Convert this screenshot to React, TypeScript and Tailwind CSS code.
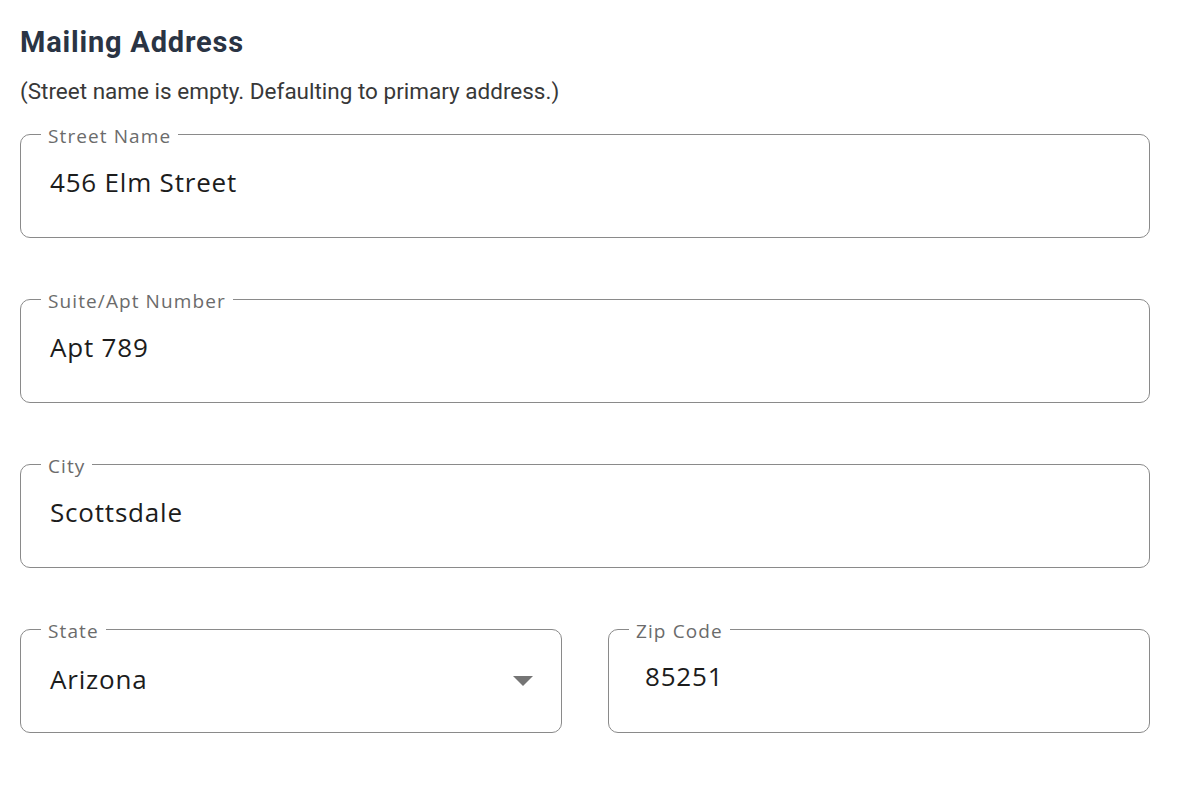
import React from "react";

const inputFont = { fontFamily: '"Open Sans", "Noto Sans", sans-serif' };

function Field({
  label,
  value,
  select = false,
  textPad = "pl-[29px] pt-[29px]",
}: {
  label: string;
  value: string;
  select?: boolean;
  textPad?: string;
}) {
  return (
    <div
      className="relative flex h-[104px] items-start justify-between rounded-[10px] border border-[#8a8a8a] bg-white"
      style={inputFont}
    >
      <span className="absolute left-[20px] top-[-9px] bg-white px-[7px] text-[19px] leading-[20px] tracking-[1.1px] text-[#6b6b6b]">
        {label}
      </span>
      <div className={`${textPad} text-[26px] leading-[36px] tracking-[0.8px] text-[#1c1c1c]`}>{value}</div>
      {select && (
        <svg
          className="mr-[28px] self-center"
          width="20"
          height="10"
          viewBox="0 0 20 10"
        >
          <path d="M0 0 L20 0 L10 10 Z" fill="#757575" />
        </svg>
      )}
    </div>
  );
}

export default function App() {
  return (
    <div className="min-h-screen bg-white pl-5 pr-[33px] pt-[25px]">
      <h2
        className="text-[29px] font-bold leading-[34px] tracking-[0.8px] text-[#2a3444]"
        style={{ fontFamily: 'Roboto, "Liberation Sans", sans-serif' }}
      >
        Mailing Address
      </h2>
      <p
        className="mt-[19px] text-[22.5px] leading-[26px] text-[#383838]"
        style={{ fontFamily: 'Roboto, "Liberation Sans", sans-serif' }}
      >
        (Street name is empty. Defaulting to primary address.)
      </p>
      <div className="mt-[30px] flex w-[1130px] flex-col gap-[61px]">
        <Field label="Street Name" value="456 Elm Street" />
        <Field label="Suite/Apt Number" value="Apt 789" />
        <Field label="City" value="Scottsdale" />
        <div className="grid grid-cols-2 gap-[46px]">
          <Field label="State" value="Arizona" select textPad="pl-[29px] pt-[31px]" />
          <Field label="Zip Code" value="85251" textPad="pl-[36px] pt-[28px]" />
        </div>
      </div>
    </div>
  );
}
